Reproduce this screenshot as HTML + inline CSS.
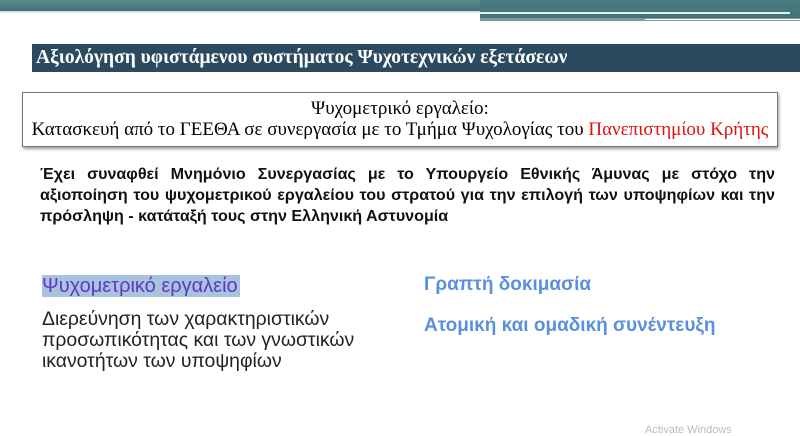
<!DOCTYPE html>
<html><head><meta charset="utf-8"><style>
body{margin:0;width:800px;height:433px;background:#fff;position:relative;overflow:hidden;font-family:"Liberation Sans",sans-serif}
.a{position:absolute}
</style></head><body>
<div class="a" style="left:0;top:0;width:800px;height:11px;background:linear-gradient(#5a8a90,#3f7378)"></div>
<div class="a" style="left:0;top:11px;width:800px;height:3px;background:linear-gradient(#cfdcdc,#fff)"></div>
<div class="a" style="left:480px;top:0;width:320px;height:18px;background:linear-gradient(#4a7d82,#3f7378)"></div>
<div class="a" style="left:480px;top:12px;width:310px;height:2px;background:#e8eeee"></div>
<div class="a" style="left:480px;top:18px;width:320px;height:3px;background:#7c9a9c"></div>
<div class="a" style="left:645px;top:19px;width:155px;height:1px;background:#fff"></div>
<div class="a" style="left:32px;top:44px;width:768px;height:28px;background:#2b4a5f;color:#fff;font:bold 19.5px/28px 'Liberation Serif',serif;padding-left:4px;box-sizing:border-box;white-space:nowrap">Αξιολόγηση υφιστάμενου συστήματος Ψυχοτεχνικών εξετάσεων</div>
<div class="a" style="left:22px;top:92px;width:756px;height:55px;border:1px solid #777;box-shadow:1px 2px 3px #999;font:19px/21px 'Liberation Serif',serif;text-align:center;padding-top:5px;box-sizing:border-box;white-space:nowrap">Ψυχομετρικό εργαλείο:<br>Κατασκευή από το ΓΕΕΘΑ σε συνεργασία με το Τμήμα Ψυχολογίας του <span style="color:#e01010">Πανεπιστημίου Κρήτης</span></div>
<div class="a" style="left:40px;top:164px;width:735px;font:bold 16.1px/21px 'Liberation Sans',sans-serif;text-align:justify;text-align-last:left;color:#111">Έχει συναφθεί Μνημόνιο Συνεργασίας με το Υπουργείο Εθνικής Άμυνας με στόχο την αξιοποίηση του ψυχομετρικού εργαλείου του στρατού για την επιλογή των υποψηφίων και την πρόσληψη - κατάταξή τους στην Ελληνική Αστυνομία</div>
<div class="a" style="left:42px;top:275px;height:22px;background:#a7c3de;color:#6236c9;font:20px/22px 'Liberation Sans',sans-serif;padding-right:2px;white-space:nowrap">Ψυχομετρικό εργαλείο</div>
<div class="a" style="left:42px;top:309px;color:#222;font:19.4px/21px 'Liberation Sans',sans-serif;white-space:nowrap">Διερεύνηση των χαρακτηριστικών<br>προσωπικότητας και των γνωστικών<br>ικανοτήτων των υποψηφίων</div>
<div class="a" style="left:424px;top:274px;color:#5b8fe0;font:bold 19px/22px 'Liberation Sans',sans-serif;white-space:nowrap">Γραπτή δοκιμασία</div>
<div class="a" style="left:424px;top:315px;color:#5b8fe0;font:bold 19px/22px 'Liberation Sans',sans-serif;white-space:nowrap">Ατομική και ομαδική συνέντευξη</div>
<div class="a" style="left:645px;top:424px;color:#bbb;font:11px 'Liberation Sans',sans-serif">Activate Windows</div>
</body></html>
